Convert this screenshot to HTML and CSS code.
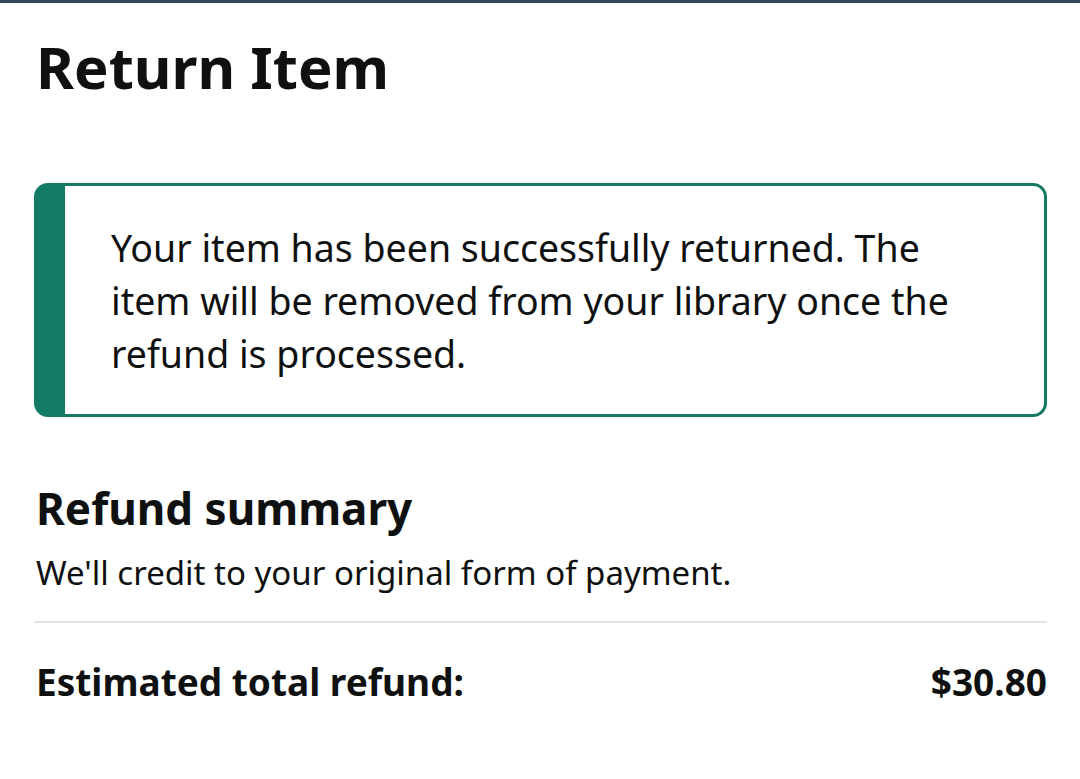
FILE: index.html
```
<!DOCTYPE html>
<html lang="en">
<head>
    <meta charset="UTF-8">
    <meta name="viewport" content="width=device-width, initial-scale=1.0">
    <title>Return Item</title>
    <link rel="stylesheet" href="styles.css">
</head>
<body>

    <div class="top-bar"></div>

    <main class="page">
        <h1>Return Item</h1>

        <!-- Success alert -->
        <div class="alert">
            <p>Your item has been successfully returned. The item will be removed from your library once the refund is processed.</p>
        </div>

        <!-- Refund summary -->
        <section class="summary">
            <h2>Refund summary</h2>
            <p class="note">We'll credit to your original form of payment.</p>
            <div class="total-row">
                <span>Estimated total refund:</span>
                <span>$30.80</span>
            </div>
        </section>
    </main>

</body>
</html>
```

FILE: styles.css
```
body {
    margin: 0;
    background-color: #fff;
    color: #0f1111;
    font-family: "Noto Sans", "Open Sans", sans-serif;
}
.top-bar {
    height: 3px;
    background-color: #37475a;
}
.page {
    padding: 0 33px 0 34px;
}
h1 {
    margin: 0;
    padding: 26px 2px 0;
    font-size: 58px;
    line-height: 76px;
    font-weight: 700;
}
.alert {
    margin-top: 78px;
    border: 3px solid #137a66;
    border-left: 31px solid #137a66;
    border-radius: 14px;
    padding: 35px 40px 34px 46px;
}
.alert p {
    margin: 0;
    font-size: 37.5px;
    line-height: 53px;
}
.summary {
    margin-top: 61px;
}
h2 {
    margin: 0;
    padding: 0 2px;
    font-size: 44px;
    line-height: 60px;
    font-weight: 700;
}
.note {
    margin: 0;
    padding: 15px 2px 0;
    font-size: 33px;
    line-height: 40px;
}
.total-row {
    margin-top: 28px;
    border-top: 2px solid #e3e3e3;
    padding: 32px 0 0 2px;
    display: flex;
    justify-content: space-between;
    font-size: 37px;
    line-height: 54px;
    font-weight: 700;
}
```
